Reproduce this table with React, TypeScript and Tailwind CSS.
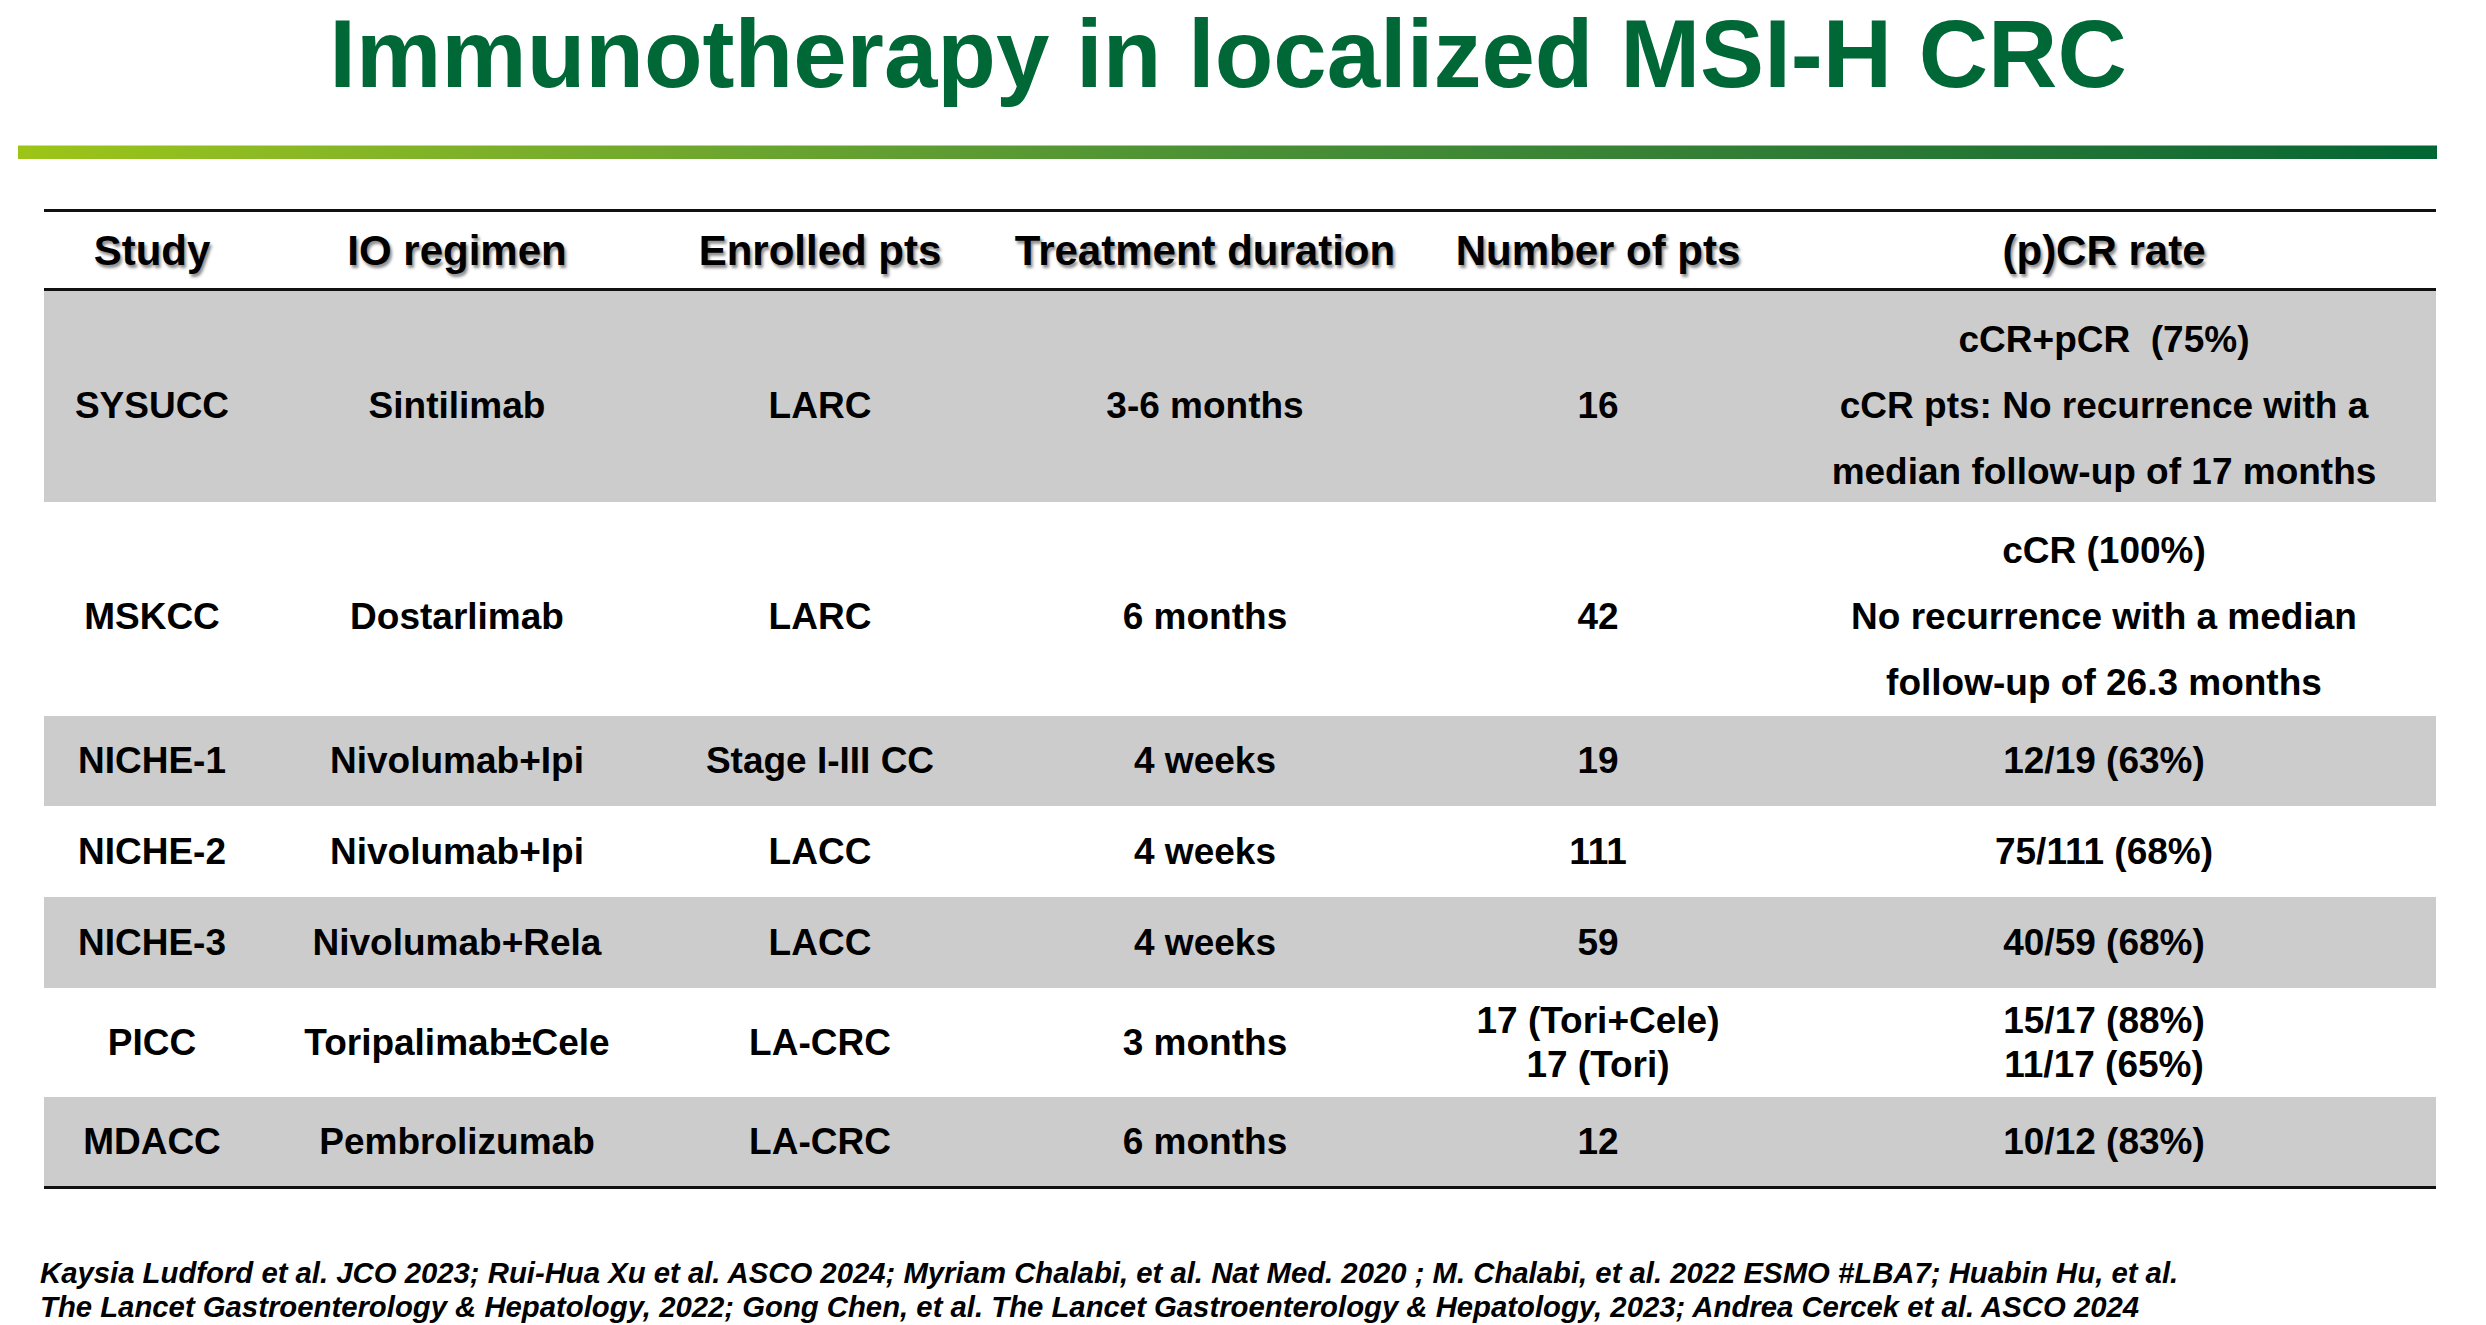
import React from 'react';

type Row = {
  study: string;
  regimen: string;
  enrolled: string;
  duration: string;
  pts: string[];
  rate: string[];
  shaded: boolean;
  tall?: boolean;
  height: string;
};

const ROWS: Row[] = [
  {
    study: 'SYSUCC',
    regimen: 'Sintilimab',
    enrolled: 'LARC',
    duration: '3-6 months',
    pts: ['16'],
    rate: ['cCR+pCR\u00a0\u00a0(75%)', 'cCR pts: No recurrence with a', 'median follow-up of 17 months'],
    shaded: true,
    tall: true,
    height: 'h-[211px]',
  },
  {
    study: 'MSKCC',
    regimen: 'Dostarlimab',
    enrolled: 'LARC',
    duration: '6 months',
    pts: ['42'],
    rate: ['cCR (100%)', 'No recurrence with a median', 'follow-up of 26.3 months'],
    shaded: false,
    tall: true,
    height: 'h-[214px]',
  },
  {
    study: 'NICHE-1',
    regimen: 'Nivolumab+Ipi',
    enrolled: 'Stage I-III CC',
    duration: '4 weeks',
    pts: ['19'],
    rate: ['12/19 (63%)'],
    shaded: true,
    height: 'h-[90px]',
  },
  {
    study: 'NICHE-2',
    regimen: 'Nivolumab+Ipi',
    enrolled: 'LACC',
    duration: '4 weeks',
    pts: ['111'],
    rate: ['75/111 (68%)'],
    shaded: false,
    height: 'h-[91px]',
  },
  {
    study: 'NICHE-3',
    regimen: 'Nivolumab+Rela',
    enrolled: 'LACC',
    duration: '4 weeks',
    pts: ['59'],
    rate: ['40/59 (68%)'],
    shaded: true,
    height: 'h-[91px]',
  },
  {
    study: 'PICC',
    regimen: 'Toripalimab\u00b1Cele',
    enrolled: 'LA-CRC',
    duration: '3 months',
    pts: ['17 (Tori+Cele)', '17 (Tori)'],
    rate: ['15/17 (88%)', '11/17 (65%)'],
    shaded: false,
    height: 'h-[109px]',
  },
  {
    study: 'MDACC',
    regimen: 'Pembrolizumab',
    enrolled: 'LA-CRC',
    duration: '6 months',
    pts: ['12'],
    rate: ['10/12 (83%)'],
    shaded: true,
    height: 'h-[89px]',
  },
];

const HEADERS = ['Study', 'IO regimen', 'Enrolled pts', 'Treatment duration', 'Number of pts', '(p)CR rate'];

const GRID = 'grid grid-cols-[216px_394px_332px_438px_348px_664px]';

const Lines: React.FC<{ lines: string[]; tall?: boolean }> = ({ lines, tall }) => (
  <div className={`flex flex-col items-center ${tall ? 'leading-[66px]' : 'leading-[44px]'}`}>
    {lines.map((l, i) => (
      <div key={i} className="whitespace-nowrap">{l}</div>
    ))}
  </div>
);

const App: React.FC = () => {
  return (
    <div className="w-[2486px] h-[1325px] bg-white overflow-hidden font-['Liberation_Sans',Arial,sans-serif] text-black">
      {/* Title */}
      <h1 className="pt-[6px] pr-[30px] text-center text-[96px] leading-[95px] font-bold text-[#006837] whitespace-nowrap">
        Immunotherapy in localized MSI-H CRC
      </h1>

      {/* Gradient rule */}
      <div className="mt-[44px] ml-[18px] w-[2419px] h-[14px] border-t border-white/50 bg-linear-to-r from-[#9cc516] via-[#4a9035] to-[#006633]" />

      {/* Table */}
      <div className="mt-[50px] ml-[44px] w-[2392px] border-t-[3px] border-b-[3px] border-[#111]">
        <div className={`${GRID} h-[79px] items-center border-b-[3px] border-[#111] text-[42px] font-bold [text-shadow:2px_3px_3px_rgba(0,0,0,0.45)]`}>
          {HEADERS.map(h => (
            <div key={h} className="text-center whitespace-nowrap">{h}</div>
          ))}
        </div>

        {ROWS.map(r => (
          <div
            key={r.study}
            className={`${GRID} ${r.height} ${r.tall ? 'pt-[16px]' : ''} items-center text-[37px] font-bold leading-[44px] ${
              r.shaded ? 'bg-[#cccccc]' : 'bg-white'
            }`}
          >
            <div className="text-center whitespace-nowrap">{r.study}</div>
            <div className="text-center whitespace-nowrap">{r.regimen}</div>
            <div className="text-center whitespace-nowrap">{r.enrolled}</div>
            <div className="text-center whitespace-nowrap">{r.duration}</div>
            <Lines lines={r.pts} />
            <Lines lines={r.rate} tall={r.tall} />
          </div>
        ))}
      </div>

      {/* References */}
      <div className="mt-[67px] ml-[40px] text-[29.3px] leading-[34px] font-bold italic whitespace-nowrap">
        <div>Kaysia Ludford et al. JCO 2023; Rui-Hua Xu et al. ASCO 2024; Myriam Chalabi, et al. Nat Med. 2020 ; M. Chalabi, et al. 2022 ESMO #LBA7; Huabin Hu, et al.</div>
        <div>The Lancet Gastroenterology &amp; Hepatology, 2022; Gong Chen, et al. The Lancet Gastroenterology &amp; Hepatology, 2023; Andrea Cercek et al. ASCO 2024</div>
      </div>
    </div>
  );
};

export default App;
